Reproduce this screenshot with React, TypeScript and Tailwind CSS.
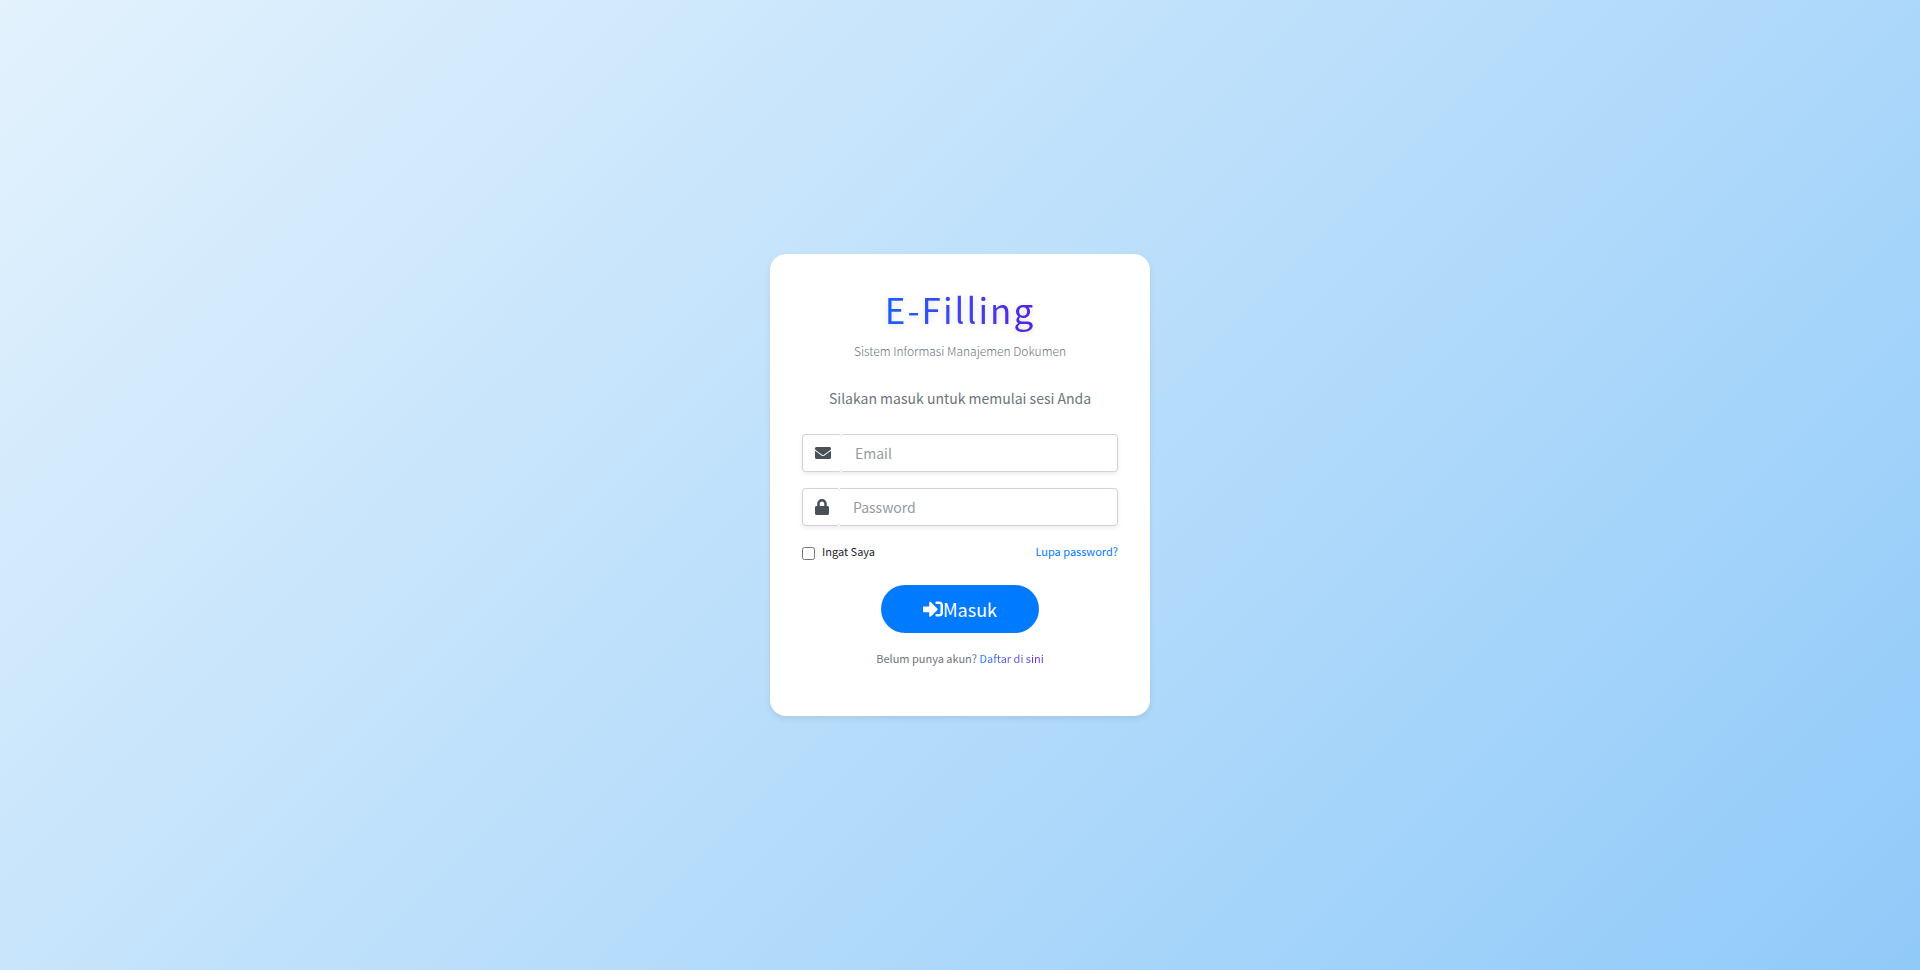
import React from "react";
import { FaEnvelope, FaLock, FaSignInAlt } from "react-icons/fa";

type FieldProps = {
  id: string;
  type: string;
  label: string;
  icon: React.ReactNode;
};

function Field({ id, type, label, icon }: FieldProps) {
  return (
    <div className="mb-4 flex h-[38px] rounded shadow-[0_2px_4px_rgba(0,0,0,0.08)]">
      <label
        htmlFor={id}
        aria-label={label}
        className="flex items-center rounded border border-r-0 border-[#ced4da] bg-white pr-[11px] pl-3 text-base text-[#495057]"
      >
        {icon}
      </label>
      <input
        id={id}
        type={type}
        placeholder={label}
        className="min-w-0 flex-1 rounded-r border border-l-0 border-[#ced4da] bg-white pr-3 pl-[13px] text-sm text-[#495057] outline-none placeholder:text-[#939ba2] placeholder:opacity-100"
      />
    </div>
  );
}

export default function App() {
  return (
    <main className="flex min-h-screen items-center justify-center bg-[linear-gradient(135deg,#e3f2fd,#90caf9)] font-['Noto_Sans_CJK_SC','Noto_Sans',sans-serif] text-[#212529]">
      <section className="w-full max-w-[380px] rounded-2xl bg-white px-8 pt-8 pb-12 shadow-[0_3px_6px_rgba(0,0,0,0.08)]">
        <header className="mb-6 text-center">
          <h1 className="mb-2 text-[35px] leading-[46px] font-normal">
            <span className="bg-linear-to-r from-[#155dfc] to-[#4f22e0] bg-clip-text tracking-[2px] text-transparent drop-shadow-[0_2px_3px_rgba(0,0,0,0.12)]">
              E-Filling
            </span>
          </h1>
          <p className="text-xs leading-[22px] font-light text-[#6c757d]">
            Sistem Informasi Manajemen Dokumen
          </p>
        </header>
        <p className="mb-6 text-center text-sm leading-6 text-[#6c757d]">
          Silakan masuk untuk memulai sesi Anda
        </p>
        <form onSubmit={(event) => event.preventDefault()}>
          <Field id="email" type="email" label="Email" icon={<FaEnvelope />} />
          <Field
            id="password"
            type="password"
            label="Password"
            icon={<FaLock className="h-4 w-3.5" />}
          />
          <div className="mb-6 flex items-center justify-between text-[11px] leading-[19px]">
            <label className="flex items-center gap-[7px]">
              <input type="checkbox" className="mt-1 size-[13px]" />
              Ingat Saya
            </label>
            <a href="#lupa" className="text-[#007bff]">
              Lupa password?
            </a>
          </div>
          <div className="mb-4 flex justify-center">
            <button
              type="submit"
              className="flex h-12 items-center justify-center rounded-full bg-[#007bff] px-[42px] text-lg font-normal text-white"
            >
              <FaSignInAlt className="size-5" />
              Masuk
            </button>
          </div>
        </form>
        <p className="text-center text-[11px] leading-[19px] text-[#6c757d]">
          Belum punya akun?{" "}
          <a
            href="#daftar"
            className="bg-linear-to-r from-[#007bff] to-[#6f22e8] bg-clip-text text-transparent"
          >
            Daftar di sini
          </a>
        </p>
      </section>
    </main>
  );
}
